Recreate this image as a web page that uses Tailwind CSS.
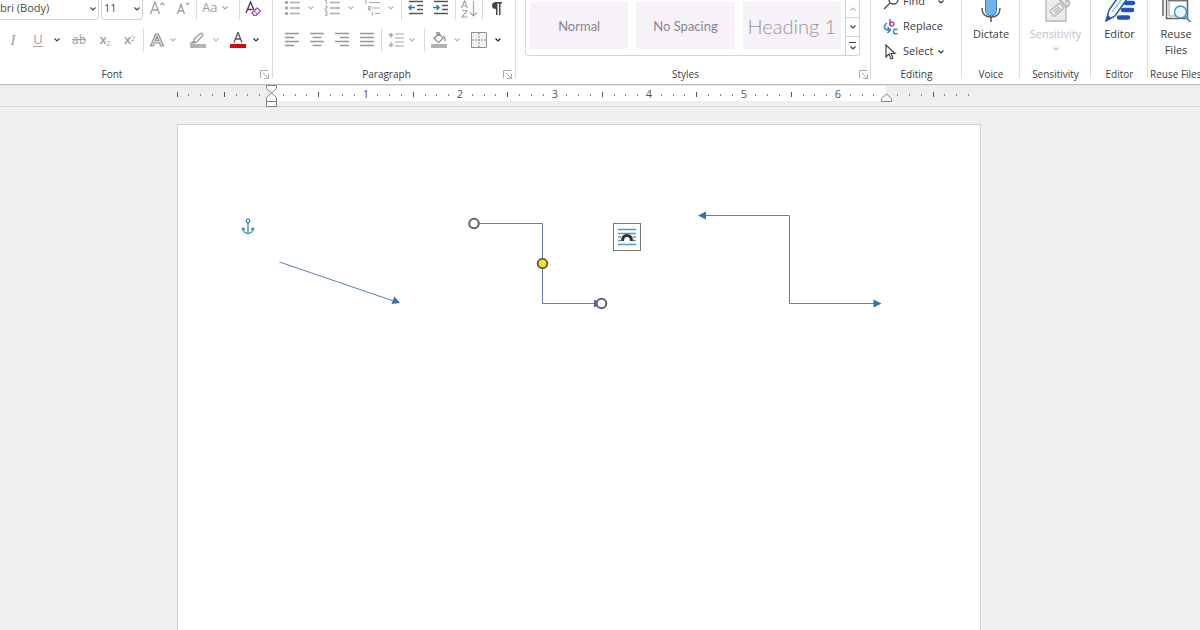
<!DOCTYPE html>
<html lang="en">
<head>
    <meta charset="UTF-8">
    <meta name="viewport" content="width=device-width, initial-scale=1.0">
    <title>Document - Word</title>
    <script src="https://cdn.jsdelivr.net/npm/@tailwindcss/browser@4"></script>
</head>
<body class="flex flex-col min-h-screen overflow-x-hidden bg-[#efefef] font-['Open_Sans',sans-serif] text-[11px] text-[#3b3b3b]">
    <!-- Shared shapes -->
    <svg class="hidden">
        <symbol id="chev" viewBox="0 0 8 6"><path d="M1.5 1.5 4 4l2.5-2.5" fill="none" stroke="currentColor" stroke-width="1.2"/></symbol>
        <symbol id="launcher" viewBox="0 0 9 9"><path d="M.5 8V.5H8M3 3l5 5M8.500 4v4.500H4" fill="none" stroke="currentColor"/></symbol>
    </svg>

    <!-- Ribbon -->
    <header class="flex h-[84px] overflow-hidden bg-white shadow-[0_1px_1px_#bdbdbd]">
        <!-- Font -->
        <section class="relative flex flex-col shrink-0 w-[273px]">
            <div class="flex items-center h-5 text-[#a0a0a0]">
                <div class="relative flex w-[99px] h-5 border-r border-b border-[#d4d4d4] rounded-br">
                    <select aria-label="Font name" class="w-full pb-0.5 appearance-none text-[11px] text-[#4a4a4a] outline-none"><option>bri (Body)</option></select>
                    <svg class="absolute right-[1px] top-[6px] w-2 h-1.5 text-[#444] pointer-events-none"><use href="#chev"/></svg>
                </div>
                <div class="relative flex w-[42px] h-5 ml-0.5 border-x border-b border-[#d4d4d4] rounded-b">
                    <select aria-label="Font size" class="w-full pl-0.5 pb-0.5 appearance-none text-[11px] text-[#4a4a4a] outline-none"><option>11</option></select>
                    <svg class="absolute right-[1px] top-[6px] w-2 h-1.5 text-[#444] pointer-events-none"><use href="#chev"/></svg>
                </div>
                <button aria-label="Grow font" class="flex justify-center w-[27px] pb-1">
                    <svg class="w-4 h-4" viewBox="0 0 16 16" fill="none" stroke="currentColor" stroke-width="1.3"><path d="M1.500 14 6 2l4.500 12M3 10h6M11.500 5 13.500 3l2 2"/></svg>
                </button>
                <button aria-label="Shrink font" class="flex justify-center w-[26px] pb-1">
                    <svg class="w-4 h-4" viewBox="0 0 16 16" fill="none" stroke="currentColor" stroke-width="1.3"><path d="M2.500 14 6 4.500 9.500 14M3.500 11h5M11 3l1.500 1.500L14 3"/></svg>
                </button>
                <span class="w-px h-5 bg-[#dcdcdc]"></span>
                <button aria-label="Change case" class="flex items-center gap-1 w-[42px] pl-[5px] pb-1 text-[13px]">Aa
                    <svg class="w-2 h-1.5"><use href="#chev"/></svg>
                </button>
                <span class="w-px h-5 bg-[#dcdcdc]"></span>
                <button aria-label="Clear formatting" class="flex justify-center w-[25px] pb-1">
                    <svg class="w-4 h-4" viewBox="0 0 16 16" fill="none"><path d="M1 13 5.500 2 9 10M2.500 9.500h5" stroke="#444" stroke-width="1.400"/><path d="m7 13 5-5 3.500 3-4.500 4.500H9z" fill="#fff" stroke="#a04fb0" stroke-width="1.400"/><path d="m9 11 3.500 3" stroke="#a04fb0"/></svg>
                </button>
            </div>
            <div class="flex items-center h-[26px] mt-[7px] text-[#a0a0a0]">
                <button class="w-[26px] font-['Liberation_Serif',serif] text-[15px] italic">I</button>
                <button class="w-6 text-[13px] underline underline-offset-2">U</button>
                <svg class="w-2 h-1.5 mx-[3px] text-[#444]"><use href="#chev"/></svg>
                <button class="w-[30px] text-[12px] line-through">ab</button>
                <button class="w-[22px] text-[13px] font-semibold">x<sub class="text-[7px] font-normal">2</sub></button>
                <button class="w-[27px] text-[13px] font-semibold">x<sup class="text-[7px] font-normal">2</sup></button>
                <span class="w-px h-6 bg-[#dcdcdc]"></span>
                <button aria-label="Text effects" class="flex items-center gap-1 ml-[5px]">
                    <svg class="w-4 h-4" viewBox="0 0 16 16"><path d="M1.500 14 6.500 2h3l5 12h-3l-1-3h-5l-1 3zM6.500 8.500h3L8 4.500z" fill="#d6d6d6" stroke="#979797" stroke-width="1.200"/></svg>
                    <svg class="w-2 h-1.5 text-[#b8b8b8]"><use href="#chev"/></svg>
                </button>
                <button aria-label="Highlight" class="flex items-center gap-1.5 ml-3">
                    <svg class="w-[17px] h-4" viewBox="0 0 17 16"><path d="M5 7 12 1q2 0 2 2L8 10H5zM5 9l-3 2h5" fill="none" stroke="#979797" stroke-width="1.200"/><path d="M1 12h16v4H1z" fill="#b3b3b3"/></svg>
                    <svg class="w-2 h-1.5 text-[#b8b8b8]"><use href="#chev"/></svg>
                </button>
                <button aria-label="Font color" class="flex items-center gap-1.5 ml-2.5">
                    <svg class="w-4 h-4" viewBox="0 0 16 16"><path d="M4 10.500 8 .5l4 10M5.500 7h5" fill="none" stroke="#555" stroke-width="1.300"/><path d="M0 12h16v4H0z" fill="#e3000b"/></svg>
                    <svg class="w-2 h-1.5 text-[#333]"><use href="#chev"/></svg>
                </button>
            </div>
            <h2 class="flex items-center justify-center h-5 mt-[11px] mr-[49px] text-[10px]">Font</h2>
            <svg class="absolute right-1 bottom-[5px] w-[9px] h-[9px] text-[#aaa]"><use href="#launcher"/></svg>
            <span class="absolute right-0 top-0 w-px h-[78px] bg-[#dcdcdc]"></span>
        </section>

        <!-- Paragraph -->
        <section class="relative flex flex-col shrink-0 w-[243px]">
            <div class="flex items-center h-5 pl-[11px] text-[#a0a0a0]">
                <button aria-label="Bullets" class="flex items-center gap-[7px] pb-1">
                    <svg class="w-4 h-4" viewBox="0 0 16 16"><path d="M1 1h3v3H1zM1 6.500h3v3H1zM1 12h3v3H1z" fill="#aaa"/><path d="M6 2.500h10M6 8h10M6 13.500h10" stroke="#aaa" stroke-width="1.300"/></svg>
                    <svg class="w-2 h-1.5 text-[#b8b8b8]"><use href="#chev"/></svg>
                </button>
                <button aria-label="Numbering" class="flex items-center gap-[7px] ml-[9px] pb-1">
                    <svg class="w-4 h-4" viewBox="0 0 16 16" fill="none" stroke="#aaa"><path d="M1 .5h1.500V4M1 6h2v2H1v2h2.500M1 11.500h2v4H1M1.500 13.500H3"/><path d="M6 2.500h10M6 8h10M6 13.500h10" stroke-width="1.300"/></svg>
                    <svg class="w-2 h-1.5 text-[#b8b8b8]"><use href="#chev"/></svg>
                </button>
                <button aria-label="Multilevel list" class="flex items-center gap-[7px] ml-[9px] pb-1">
                    <svg class="w-4 h-4" viewBox="0 0 16 16" fill="none" stroke="#aaa"><path d="M1 1h1v3M4 6.500h2V10H4.500V8H6M8.500 12v3.500M5 2.500h11M8 8h8M11 13.500h5" stroke-width="1.200"/></svg>
                    <svg class="w-2 h-1.5 text-[#b8b8b8]"><use href="#chev"/></svg>
                </button>
                <span class="w-px h-5 ml-1.5 bg-[#dcdcdc]"></span>
                <button aria-label="Decrease indent" class="ml-1.5 pb-1">
                    <svg class="block w-4 h-4" viewBox="0 0 16 16" fill="none"><path d="M1 1.500h14M9 5.500h6M9 9.500h6M1 13.500h14" stroke="#555" stroke-width="1.300"/><path d="M7 7.500H1M3.500 5 1 7.500 3.500 10" stroke="#1c87a5" stroke-width="1.500"/></svg>
                </button>
                <button aria-label="Increase indent" class="ml-[9px] pb-1">
                    <svg class="block w-4 h-4" viewBox="0 0 16 16" fill="none"><path d="M1 1.500h14M9 5.500h6M9 9.500h6M1 13.500h14" stroke="#555" stroke-width="1.300"/><path d="M0 7.500h6M3.500 5 6 7.500 3.500 10" stroke="#1c87a5" stroke-width="1.500"/></svg>
                </button>
                <span class="w-px h-5 ml-1.5 bg-[#dcdcdc]"></span>
                <button aria-label="Sort" class="ml-1 pb-0.5">
                    <svg class="block w-[18px] h-[18px]" viewBox="0 0 18 18" fill="none" stroke="#a4a4a4" stroke-width="1.200"><path d="M1.500 8 4.500 1l3 7M2.500 6h4M2 10.500h5L2 17h5.500M13.500 1v15M10 12.500l3.500 3.500 3.500-3.500"/></svg>
                </button>
                <span class="w-px h-5 ml-1 bg-[#dcdcdc]"></span>
                <button aria-label="Show paragraph marks" class="ml-2 pb-1">
                    <svg class="block w-3 h-4" viewBox="0 0 12 16"><path d="M11 2v1.500H9.500V15H8V3.500H6.500V15H5V9Q1 9 1 5.500T5 2z" fill="#444"/></svg>
                </button>
            </div>
            <div class="flex items-center h-[26px] mt-[7px] pl-[11px]">
                <button aria-label="Align left"><svg class="block w-4 h-4" viewBox="0 0 16 16" stroke="#999" stroke-width="1.300"><path d="M1 1.500h14M1 5.500h9M1 9.500h14M1 13.500h9"/></svg></button>
                <button aria-label="Center" class="ml-[9px]"><svg class="block w-4 h-4" viewBox="0 0 16 16" stroke="#999" stroke-width="1.300"><path d="M1 1.500h14M3.500 5.500h9M1 9.500h14M3.500 13.500h9"/></svg></button>
                <button aria-label="Align right" class="ml-[9px]"><svg class="block w-4 h-4" viewBox="0 0 16 16" stroke="#999" stroke-width="1.300"><path d="M1 1.500h14M6 5.500h9M1 9.500h14M6 13.500h9"/></svg></button>
                <button aria-label="Justify" class="ml-[9px]"><svg class="block w-4 h-4" viewBox="0 0 16 16" stroke="#999" stroke-width="1.300"><path d="M1 1.500h14M1 5.500h14M1 9.500h14M1 13.500h14"/></svg></button>
                <span class="w-px h-6 ml-1.5 bg-[#dcdcdc]"></span>
                <button aria-label="Line spacing" class="flex items-center gap-1 ml-1.5">
                    <svg class="w-4 h-4" viewBox="0 0 16 16" fill="none" stroke="#a4a4a4" stroke-width="1.200"><path d="M7 2h9M7 6h9M7 10h9M7 14h9M3 1v5M1 3.500l2-2 2 2M3 10v5M1 12.500l2 2 2-2"/></svg>
                    <svg class="w-2 h-1.5 text-[#b8b8b8]"><use href="#chev"/></svg>
                </button>
                <span class="w-px h-6 ml-2 bg-[#dcdcdc]"></span>
                <button aria-label="Shading" class="flex items-center gap-1.5 ml-1.5">
                    <svg class="w-4 h-4" viewBox="0 0 16 16"><path d="M3 6.500 8 1.500l4 5-4.500 4zM6 4V.5h2V4M12 4q2.500 1 2 5" fill="none" stroke="#8c8c8c" stroke-width="1.200"/><path d="M0 12h16v4H0z" fill="#b3b3b3"/></svg>
                    <svg class="w-2 h-1.5 text-[#b8b8b8]"><use href="#chev"/></svg>
                </button>
                <button aria-label="Borders" class="flex items-center gap-[7px] ml-2.5">
                    <svg class="w-4 h-4" viewBox="0 0 16 16" fill="#f2f2f2" stroke="#909090"><path d="M.5.5h15v15H.5z"/><path d="M8 1v14M1 8h14" stroke-dasharray="2 1"/></svg>
                    <svg class="w-2 h-1.5 text-[#222]"><use href="#chev"/></svg>
                </button>
            </div>
            <h2 class="flex items-center justify-center h-5 mt-[11px] mr-4 text-[10px]">Paragraph</h2>
            <svg class="absolute right-1 bottom-[5px] w-[9px] h-[9px] text-[#aaa]"><use href="#launcher"/></svg>
            <span class="absolute right-0 top-0 w-px h-[78px] bg-[#dcdcdc]"></span>
        </section>

        <!-- Styles -->
        <section class="relative flex flex-col flex-1 min-w-[355px]">
            <div class="flex h-[56px] ml-[9px] mr-[11px] border-x border-b border-[#d4d4d4] rounded-b font-['Lato',sans-serif] text-[13px] text-[#8a868c]">
                <div class="flex flex-1 gap-2 pt-0.5 pb-1.5 px-1">
                    <button class="flex-1 pt-0.5 bg-[#f6f2f8]">Normal</button>
                    <button class="flex-1 pt-0.5 bg-[#f6f2f8] whitespace-nowrap">No Spacing</button>
                    <button class="flex-1 bg-[#f6f2f8] whitespace-nowrap text-xl font-light text-[#969298]">Heading 1</button>
                </div>
                <div class="flex flex-col w-3.5 border-l border-[#d4d4d4] text-[#444]">
                    <button aria-label="Scroll up" class="flex items-center justify-center h-[17px] text-[#b8b8b8]"><svg class="w-2 h-1.5 rotate-180"><use href="#chev"/></svg></button>
                    <button aria-label="Scroll down" class="flex items-center justify-center h-5 border-y border-[#d4d4d4]"><svg class="w-2 h-1.5"><use href="#chev"/></svg></button>
                    <button aria-label="More styles" class="flex flex-col items-center justify-center flex-1"><span class="w-[7px] h-px mb-0.5 bg-[#444]"></span><svg class="w-2 h-1.5"><use href="#chev"/></svg></button>
                </div>
            </div>
            <h2 class="flex items-center justify-center h-5 mt-2 mr-4 text-[10px]">Styles</h2>
            <svg class="absolute right-[3px] bottom-[5px] w-[9px] h-[9px] text-[#aaa]"><use href="#launcher"/></svg>
            <span class="absolute right-0 top-0 w-px h-[78px] bg-[#dcdcdc]"></span>
        </section>

        <!-- Editing -->
        <section class="relative flex flex-col shrink-0 w-[91px]">
            <div class="flex flex-col justify-end h-16 pl-3">
                <button class="flex items-center shrink-0 gap-1 h-[25px]">
                    <svg class="w-4 h-4" viewBox="0 0 16 16" fill="none" stroke="#444" stroke-width="1.300"><circle cx="10.500" cy="5.500" r="4.500"/><path d="m7 9-6 6"/></svg>
                    Find
                    <svg class="w-2 h-1.5 ml-2"><use href="#chev"/></svg>
                </button>
                <button class="flex items-center shrink-0 gap-1 h-[25px]">
                    <svg class="w-4 h-4" viewBox="0 0 16 16" fill="none" stroke-width="1.500"><path d="M7 0v7" stroke="#a74fb5"/><circle cx="9" cy="5" r="1.900" stroke="#a74fb5"/><path d="M14.500 10.500q-4-1-4 2t4 2" stroke="#2b88c8"/><path d="M4 4q-3 2-2.500 4.500T7 11M4.500 8 7.500 11l-3 3" stroke="#2b88c8"/></svg>
                    Replace
                </button>
                <button class="flex items-center shrink-0 gap-1 h-[25px]">
                    <svg class="w-4 h-4" viewBox="0 0 16 16" fill="none" stroke="#444" stroke-width="1.200"><path d="M3 1v12l3-3 2 5 2-1-2-4.500h4z"/></svg>
                    <span class="flex items-center gap-1">Select <svg class="w-2 h-1.5"><use href="#chev"/></svg></span>
                </button>
            </div>
            <h2 class="flex items-center justify-center h-5 text-[10px]">Editing</h2>
            <span class="absolute right-0 top-0 w-px h-[78px] bg-[#dcdcdc]"></span>
        </section>

        <!-- Voice -->
        <section class="relative flex flex-col shrink-0 w-[58px]">
            <button class="flex flex-col items-center justify-end h-16 pb-1.5 leading-4">
                <svg class="shrink-0 w-8 h-8 mb-1" viewBox="0 0 32 32" fill="none"><rect x="10.500" y="3" width="11" height="23" rx="5.500" fill="#6fb3e8" stroke="#3d7eb8"/><path d="M7 18q0 9 9 9t9-9M16 27v5" stroke="#555" stroke-width="1.500"/></svg>
                <span class="shrink-0 h-8">Dictate</span>
            </button>
            <h2 class="flex items-center justify-center h-5 text-[10px]">Voice</h2>
            <span class="absolute right-0 top-0 w-px h-[78px] bg-[#dcdcdc]"></span>
        </section>

        <!-- Sensitivity -->
        <section class="relative flex flex-col shrink-0 w-[71px]">
            <button class="flex flex-col items-center justify-end h-16 pb-1.5 leading-4 text-[#c2c2c2]" disabled>
                <svg class="shrink-0 w-8 h-8 mb-1" viewBox="0 0 32 32" fill="#ececec" stroke="#b5b5b5" stroke-width="1.300"><path d="M6 4h20v27H6z"/><g transform="rotate(-40 17 19)"><rect x="10" y="16" width="13" height="7" rx="1"/><path d="M13 18.500h7M13 21h7"/></g><path d="m19 9 7 8q4-1 3-5l-7-8" fill="none" stroke-width="2"/></svg>
                <span class="flex flex-col items-center shrink-0 h-8">Sensitivity <svg class="w-2 h-1.5 mt-1"><use href="#chev"/></svg></span>
            </button>
            <h2 class="flex items-center justify-center h-5 text-[10px]">Sensitivity</h2>
            <span class="absolute right-0 top-0 w-px h-[78px] bg-[#dcdcdc]"></span>
        </section>

        <!-- Editor -->
        <section class="relative flex flex-col shrink-0 w-[57px]">
            <button class="flex flex-col items-center justify-end h-16 pb-1.5 leading-4">
                <svg class="shrink-0 w-8 h-8 mb-1" viewBox="0 0 32 32" fill="none"><path d="M22 13h7M19 20h9M15 27.500h9" stroke="#1f55b5" stroke-width="4.500" stroke-linecap="round"/><path d="M2 31 5 20 18 2l7 4L11 26z" fill="#fff" stroke="#1f55b5" stroke-width="1.500"/><path d="m2 31 2-6 3 3z" fill="#1f55b5"/><path d="M8 22 21 5" stroke="#8fc0ee" stroke-width="1.500"/></svg>
                <span class="shrink-0 h-8">Editor</span>
            </button>
            <h2 class="flex items-center justify-center h-5 text-[10px]">Editor</h2>
            <span class="absolute right-0 top-0 w-px h-[78px] bg-[#dcdcdc]"></span>
        </section>

        <!-- Reuse Files -->
        <section class="flex flex-col shrink-0 w-[52px]">
            <button class="flex flex-col items-center justify-end h-16 pb-1.5 pl-1 leading-4">
                <svg class="shrink-0 w-8 h-8 mb-1" viewBox="0 0 32 32" fill="none"><path d="M3 4v22M6.500 4v24.500h21V4" stroke="#666" stroke-width="1.500"/><path d="M8 10.500h19" stroke="#777" stroke-width="2"/><path d="M9 12v14h8" stroke="#999"/><circle cx="20.500" cy="22" r="6" fill="#eaf6fc" stroke="#3e9ac4" stroke-width="1.500"/><path d="m25 26.500 6 6" stroke="#3e9ac4" stroke-width="1.800"/></svg>
                <span class="w-10 shrink-0 h-8">Reuse Files</span>
            </button>
            <h2 class="flex items-center h-5 pl-0.5 whitespace-nowrap text-[10px]">Reuse Files</h2>
        </section>
    </header>

    <!-- Ruler -->
    <div class="h-[23px] pr-[42px] border-b border-[#d6d6d6]">
        <svg id="ruler" class="block w-[804px] h-[23px] mx-auto overflow-visible text-[11px]" viewBox="0 0 804 23" fill="#555">
            <rect x="94" y="2" width="615" height="15" fill="#fff"/>
        </svg>
    </div>

    <!-- Page -->
    <main class="flex flex-1 pt-[17px] pr-[42px]">
        <article class="relative w-[804px] mx-auto bg-white border border-b-0 border-[#cfcfcf]">
            <svg class="block w-[802px] h-[505px]" viewBox="0 0 802 505" fill="none" stroke="#5b7db8">
                <g stroke="#2f93a3" stroke-width="1.300">
                    <circle cx="70" cy="96" r="1.800"/>
                    <path d="M70 98v10M65 103q0 5 5 5.500 5-.5 5-5.500M64 105l1-2 2 1.500M76 105l-1-2-2 1.500"/>
                </g>
                <path d="m101.500 137 114 39"/>
                <path d="m222 178-8.500 1 3-7.500z" fill="#3f6ab5" stroke="none"/>
                <path d="M296 98.500h68.500v80h54"/>
                <path d="m424 178.500-8-4v8z" fill="#3f6ab5" stroke="none"/>
                <path d="M526 90.500h85.500v88H697"/>
                <path d="m520 90.500 8-4v8zM703.500 178.500l-8-4v8z" fill="#3f6ab5" stroke="none"/>
                <g fill="#fff" stroke="#636363" stroke-width="2">
                    <circle cx="296" cy="98.500" r="4.800"/>
                    <circle cx="423.500" cy="178.500" r="4.800"/>
                    <circle cx="364.500" cy="138.500" r="4.800" fill="#f2e21c"/>
                </g>
            </svg>
            <button aria-label="Layout options" class="absolute left-[435px] top-[98px] flex items-center justify-center w-7 h-7 bg-white border border-[#777]">
                <svg class="w-[18px] h-[18px]" viewBox="0 0 18 18" fill="none"><path d="M0 1.500h18M0 5.500h18M0 9h3M15 9h3M0 12.500h3M15 12.500h3M0 16.500h18" stroke="#4a9cc0" stroke-width="1.400"/><path d="M4.500 13q0-5.500 4.500-5.500t4.500 5.500" fill="#fff" stroke="#333" stroke-width="3"/></svg>
            </button>
        </article>
    </main>

    <script>
        // Eighth-inch marks, counted from the left margin
        const ruler = document.getElementById('ruler');
        const inch = 94.5;
        const zero = 94;
        let marks = '';

        for (let i = -8; i <= 59; i++) {
            const x = Math.round(zero + i * inch / 8);
            if (i === 0 || i === 52) continue;
            if (i > 0 && i % 8 === 0 && i < 52) {
                marks += `<text x="${x}" y="14" text-anchor="middle">${i / 8}</text>`;
            } else if (i % 4 === 0) {
                marks += `<rect x="${x}" y="8" width="1" height="5"/>`;
            } else {
                marks += `<rect x="${x}" y="10" width="1" height="2" fill="#888"/>`;
            }
        }

        // Indent markers
        marks += '<g fill="#fff" stroke="#808080"><path d="M89.500 1.500h10v3l-5 4.500-5-4.500zM89.500 22.500v-9l5-4.500 5 4.500v9zM89.500 17.500h10"/>';
        marks += '<path d="M704.500 17.500v-3l5-4.500 5 4.500v3z"/></g>';
        ruler.innerHTML += marks;
    </script>
</body>
</html>
